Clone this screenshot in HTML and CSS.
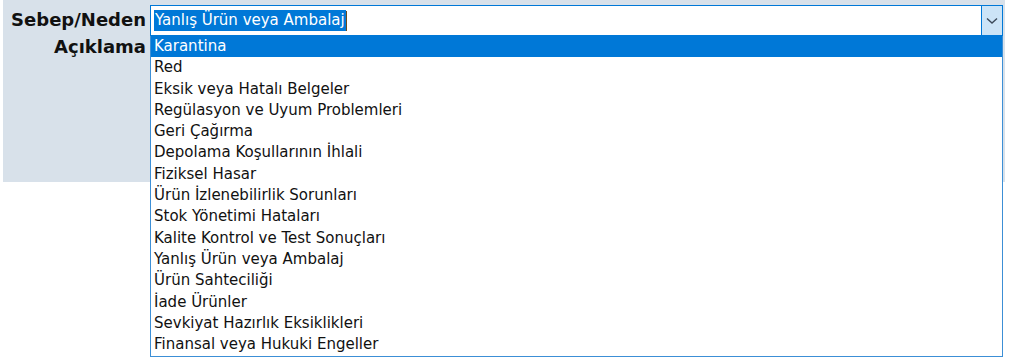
FILE: index.html
```html
<!DOCTYPE html>
<html lang="tr">
<head>
    <meta charset="UTF-8">
    <title>Sebep/Neden</title>
    <link rel="stylesheet" href="styles.css">
</head>
<body>
    <div class="page">
        <div class="panel">
            <div class="row">
                <div class="label">Sebep/Neden</div>
                <div class="combo-wrap">
                    <div class="combo">
                        <span class="combo-text"><span class="sel">Yanlış Ürün veya Ambalaj</span><span class="caret"></span></span>
                        <span class="combo-btn">
                            <svg width="12" height="8" viewBox="0 0 12 8"><path d="M1 1.5 L6 6 L11 1.5" fill="none" stroke="#3c4a5a" stroke-width="1.4"/></svg>
                        </span>
                    </div>
                    <ul class="dropdown">
                        <li class="hot">Karantina</li>
                        <li>Red</li>
                        <li>Eksik veya Hatalı Belgeler</li>
                        <li>Regülasyon ve Uyum Problemleri</li>
                        <li>Geri Çağırma</li>
                        <li>Depolama Koşullarının İhlali</li>
                        <li>Fiziksel Hasar</li>
                        <li>Ürün İzlenebilirlik Sorunları</li>
                        <li>Stok Yönetimi Hataları</li>
                        <li>Kalite Kontrol ve Test Sonuçları</li>
                        <li>Yanlış Ürün veya Ambalaj</li>
                        <li>Ürün Sahteciliği</li>
                        <li>İade Ürünler</li>
                        <li>Sevkiyat Hazırlık Eksiklikleri</li>
                        <li>Finansal veya Hukuki Engeller</li>
                    </ul>
                </div>
            </div>
            <div class="row">
                <div class="label">Açıklama</div>
            </div>
        </div>
    </div>
</body>
</html>
```

FILE: styles.css
```css
body {
    margin: 0;
    padding: 0;
    font-family: 'DejaVu Sans', sans-serif;
    background-color: #ffffff;
    color: #1a1a1a;
}

.page {
    width: 1036px;
    height: 360px;
    overflow: hidden;
}

.panel {
    margin-left: 3px;
    width: 1002px;
    height: 182px;
    background-color: #d8e1ea; /* cinza azulado do formulário */
    padding-top: 5px;
    box-sizing: border-box;
}

.row {
    display: flex;
    align-items: flex-start;
}

.label {
    width: 143px;
    text-align: right;
    font-weight: bold;
    font-size: 18px;
    line-height: 30px;
    color: #111111;
    white-space: nowrap;
}

.row + .row .label {
    line-height: 22px;
}

.combo-wrap {
    position: relative;
    margin-left: 4px;
    width: 853px;
}

.combo {
    display: flex;
    height: 31px;
    border: 1px solid #0078d7;
    background-color: #ffffff;
    box-sizing: border-box;
}

.combo-text {
    flex: 1;
    display: flex;
    align-items: center;
    padding-left: 3px;
    font-size: 15px;
}

.sel {
    background-color: #0078d7;
    color: #ffffff;
    padding: 1px 1px 2px 1px;
}

.caret {
    width: 1px;
    height: 20px;
    background-color: #6b4a1a;
}

.combo-btn {
    width: 20px;
    background-color: #cce4f7;
    border-left: 1px solid #0078d7;
    display: flex;
    align-items: center;
    justify-content: center;
}

.dropdown {
    position: absolute;
    top: 31px;
    left: 0;
    right: 0;
    margin: 0;
    padding: 0 0 1px 0;
    list-style: none;
    background-color: #ffffff;
    border: 1px solid #3c8fd6;
    border-top: none;
}

.dropdown li {
    height: 21.3px;
    line-height: 21.3px;
    padding-left: 3px;
    font-size: 15px;
    color: #111111;
    white-space: nowrap;
}

.dropdown li.hot {
    background-color: #0078d7;
    color: #ffffff;
}
```
